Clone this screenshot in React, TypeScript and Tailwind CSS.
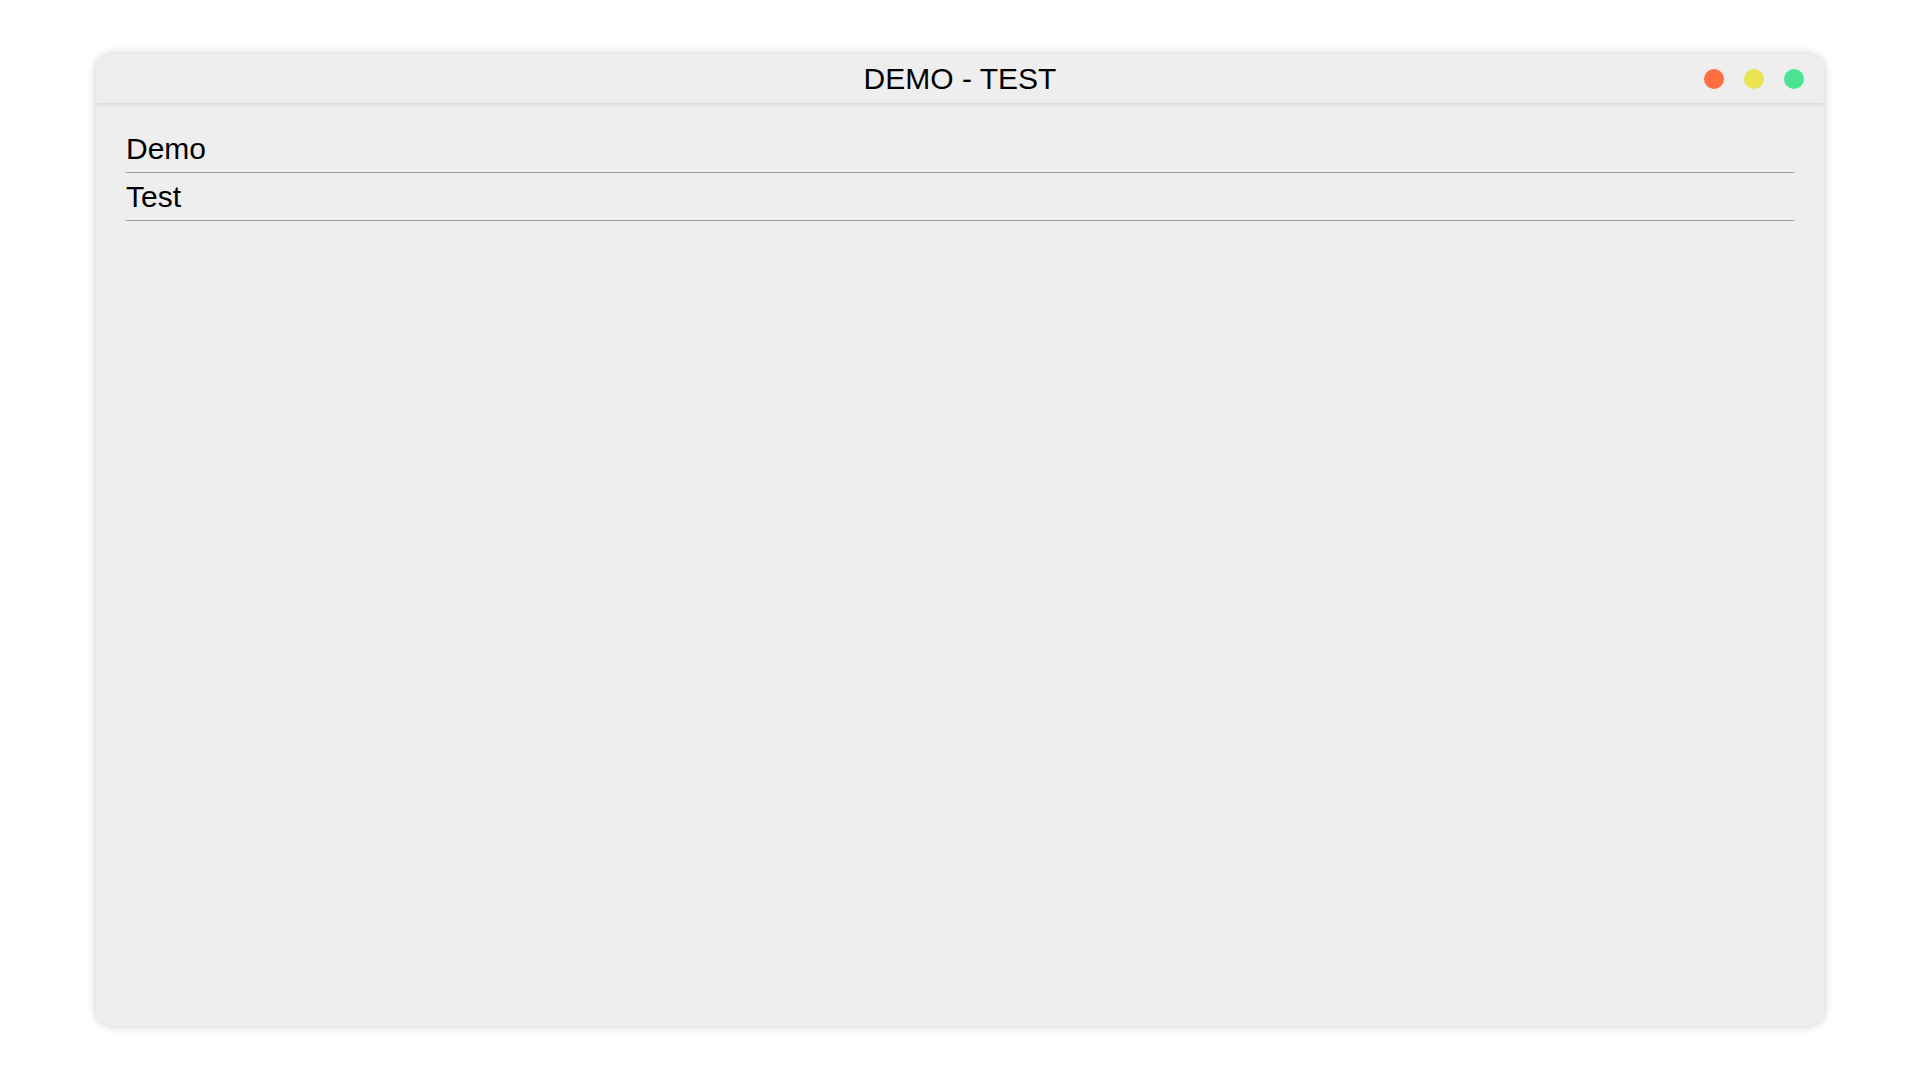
import React from "react";

export default function App() {
  const items = ["Demo", "Test"];
  return (
    <div
      className="w-screen h-screen bg-white flex items-center justify-center"
      style={{ fontFamily: '"Liberation Sans", Arial, sans-serif' }}
    >
      <div className="w-[1728px] h-[972px] bg-[#eeeeee] rounded-[16px] shadow-[0_0_10px_rgba(0,0,0,0.22)] flex flex-col overflow-hidden">
        <div className="relative h-[49px] shrink-0 flex items-center justify-center shadow-[0_1px_4px_rgba(0,0,0,0.12)]">
          <span className="text-[30px] leading-[36px] text-black">DEMO - TEST</span>
          <div className="absolute right-[20px] top-0 h-full flex items-center gap-[20px]">
            <span className="w-[20px] h-[20px] rounded-full bg-[#ff6e42]" />
            <span className="w-[20px] h-[20px] rounded-full bg-[#ebe452]" />
            <span className="w-[20px] h-[20px] rounded-full bg-[#4be394]" />
          </div>
        </div>
        <div className="flex flex-col px-[30px] pt-[22px]">
          {items.map((t) => (
            <div
              key={t}
              className="pt-[6px] pb-[5px] border-b border-[#9a9a9a] text-[30px] leading-[36px] text-black"
            >
              {t}
            </div>
          ))}
        </div>
      </div>
    </div>
  );
}
